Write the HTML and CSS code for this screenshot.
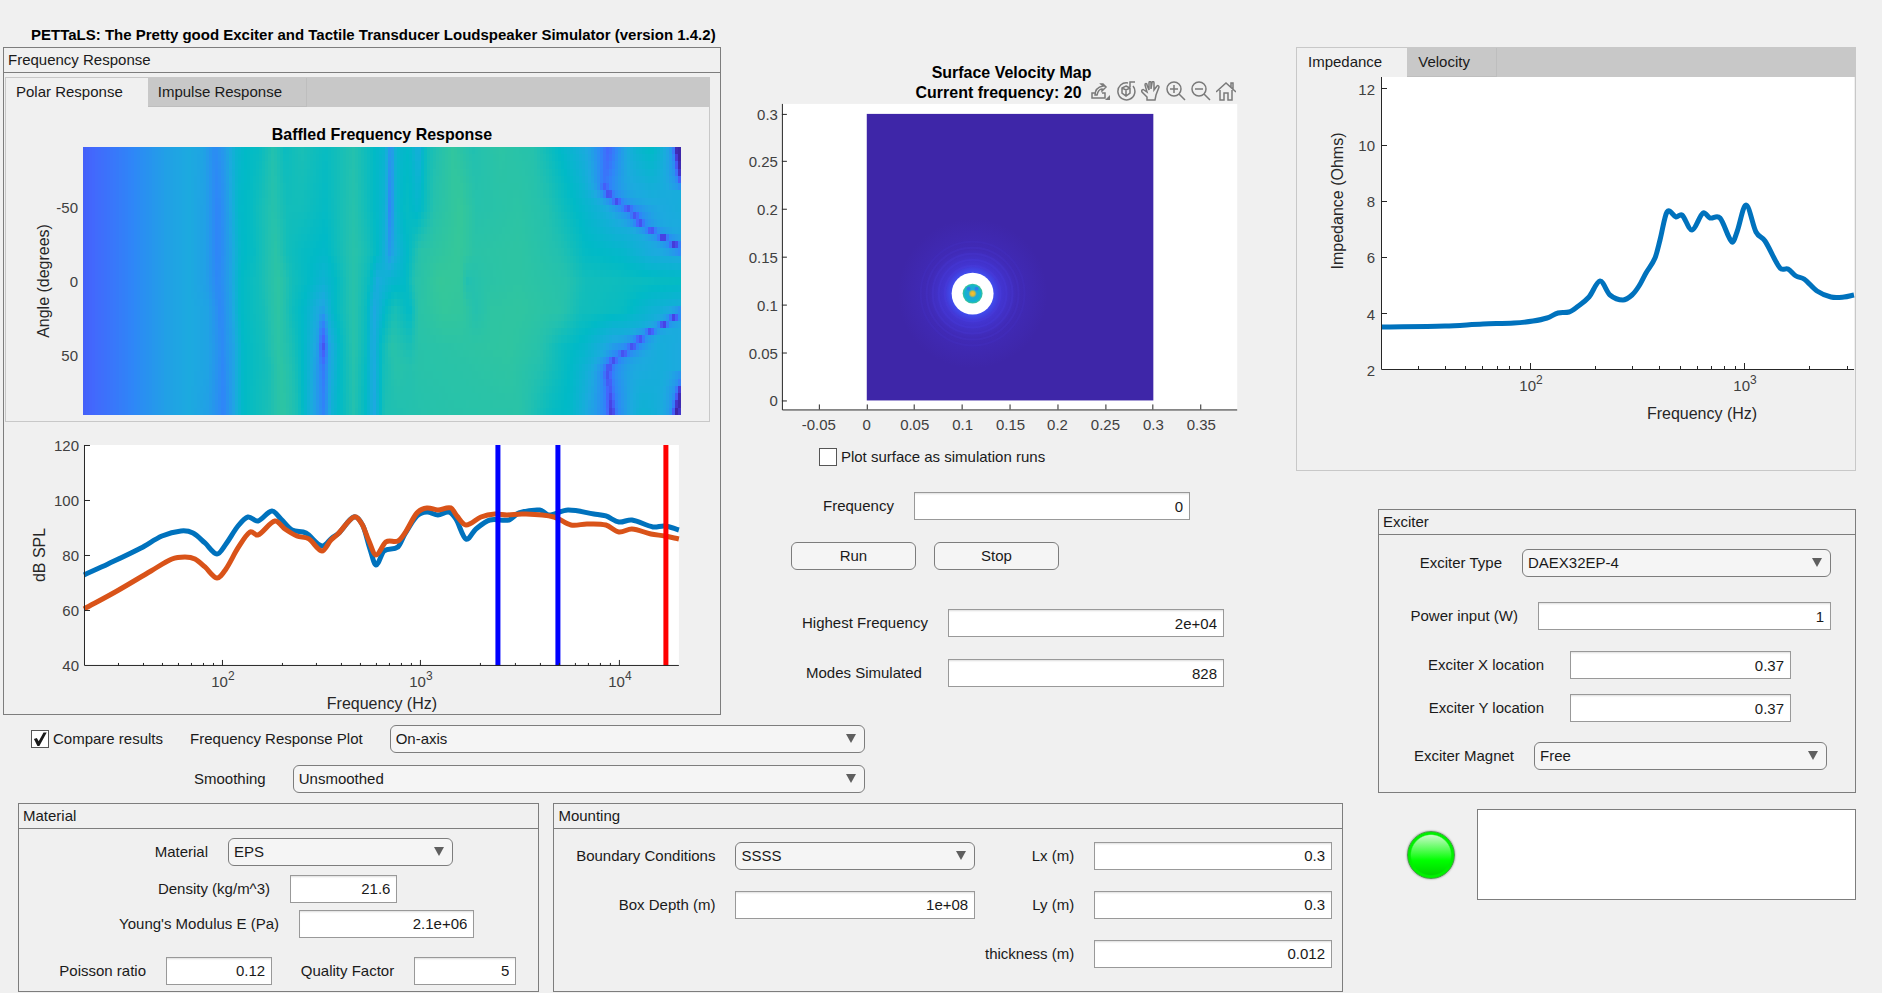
FILE: index.html
```html
<!DOCTYPE html>
<html lang="en">
<head>
    <meta charset="UTF-8">
    <meta name="viewport" content="width=device-width, initial-scale=1.0">
    <title>PETTaLS</title>
    <link rel="stylesheet" href="styles.css">
</head>
<body>
    <h1>PETTaLS: The Pretty good Exciter and Tactile Transducer Loudspeaker Simulator (version 1.4.2)</h1>

    <main class="app">
        <div class="upper">
            <div class="plots">
                <section class="panel response">
                    <h2>Frequency Response</h2>
                    <div class="tab-group">
                        <div class="tabs">
                            <button type="button" class="tab active">Polar Response</button>
                            <button type="button" class="tab">Impulse Response</button>
                        </div>
                        <svg class="chart" viewBox="0 0 703 314">
                            <text class="chart-title" x="376" y="33">Baffled Frequency Response</text>
                            <g id="heatmap" transform="translate(77 40)" shape-rendering="crispEdges"></g>
                            <text class="tick right" x="72" y="106">-50</text>
                            <text class="tick right" x="72" y="180">0</text>
                            <text class="tick right" x="72" y="254">50</text>
                            <text class="axis" transform="translate(43 174) rotate(-90)">Angle (degrees)</text>
                        </svg>
                    </div>
                    <svg class="chart" viewBox="0 0 716 292">
                        <g transform="translate(80 23)">
                            <rect class="plot" width="595" height="221"/>
                            <path id="splBlue" class="trace blue"/>
                            <path id="splOrange" class="trace orange"/>
                            <path class="marker" stroke="#0000ff" d="M414 0V221M474 0V221"/>
                            <path class="marker" stroke="#ff0000" d="M582 0V221"/>
                            <path class="axis-line" d="M.5 0V220.500H595M0 .5H6M0 55.500H6M0 110.500H6M0 165.500H6M138.500 221v-6M336.500 221v-6M535.500 221v-6"/>
                            <path id="splTicks" class="axis-line"/>
                            <text class="tick right" x="-5" y="6">120</text>
                            <text class="tick right" x="-5" y="61">100</text>
                            <text class="tick right" x="-5" y="116">80</text>
                            <text class="tick right" x="-5" y="171">60</text>
                            <text class="tick right" x="-5" y="226">40</text>
                            <text class="tick" x="139" y="242">10<tspan class="sup" dy="-7">2</tspan></text>
                            <text class="tick" x="337" y="242">10<tspan class="sup" dy="-7">3</tspan></text>
                            <text class="tick" x="536" y="242">10<tspan class="sup" dy="-7">4</tspan></text>
                            <text class="axis" x="298" y="264">Frequency (Hz)</text>
                            <text class="axis" transform="translate(-39 110) rotate(-90)">dB SPL</text>
                        </g>
                    </svg>
                </section>

                <section class="surface">
                    <div class="surface-plot">
                        <svg class="chart" viewBox="0 0 576 394">
                            <defs>
                                <radialGradient id="wave" cx="106" cy="180" r="75" gradientUnits="userSpaceOnUse">
                                    <stop offset="0" stop-color="#3f6bff"/>
                                    <stop offset=".26" stop-color="#4050f4"/>
                                    <stop offset=".38" stop-color="#4235d2"/>
                                    <stop offset=".6" stop-color="#402ab6"/>
                                    <stop offset="1" stop-color="#3e26a8"/>
                                </radialGradient>
                                <radialGradient id="core" cx="106" cy="180" r="10" gradientUnits="userSpaceOnUse">
                                    <stop offset="0" stop-color="#ffbe32"/>
                                    <stop offset=".22" stop-color="#d8bb36"/>
                                    <stop offset=".42" stop-color="#1fa8d8"/>
                                    <stop offset=".8" stop-color="#13b4ce"/>
                                    <stop offset="1" stop-color="#3fc594"/>
                                </radialGradient>
                            </defs>
                            <text class="chart-title" x="291" y="31">Surface Velocity Map</text>
                            <text class="chart-title" x="278" y="51">Current frequency: 20</text>
                            <rect class="plot" x="61" y="57" width="456" height="307"/>
                            <g transform="translate(146 67)">
                                <rect width="287" height="287" fill="#3e26a8"/>
                                <circle cx="106" cy="180" r="75" fill="url(#wave)"/>
                                <g fill="none" stroke="#4a3ddd" stroke-width="2">
                                    <circle cx="106" cy="180" r="28" opacity=".35"/>
                                    <circle cx="106" cy="180" r="34" opacity=".3"/>
                                    <circle cx="106" cy="180" r="40" opacity=".25"/>
                                    <circle cx="106" cy="180" r="46" opacity=".2"/>
                                    <circle cx="106" cy="180" r="52" opacity=".12"/>
                                </g>
                                <circle cx="106" cy="180" r="21" fill="#fff"/>
                                <circle cx="106" cy="180" r="10" fill="url(#core)"/>
                                <circle cx="102" cy="175" r="2" fill="#2e7fe8"/>
                                <circle cx="110" cy="175" r="2" fill="#2e7fe8"/>
                            </g>
                            <path class="axis-line" d="M61.500 57V363.500H517M61 67.500h5M61 114.500h5M61 162.500h5M61 210.500h5M61 258.500h5M61 306.500h5M61 354.500h5M98.500 363v-5M146.500 363v-5M193.500 363v-5M241.500 363v-5M289.500 363v-5M337.500 363v-5M385.500 363v-5M432.500 363v-5M480.500 363v-5"/>
                            <text class="tick right" x="57" y="73">0.3</text>
                            <text class="tick right" x="57" y="120">0.25</text>
                            <text class="tick right" x="57" y="168">0.2</text>
                            <text class="tick right" x="57" y="216">0.15</text>
                            <text class="tick right" x="57" y="264">0.1</text>
                            <text class="tick right" x="57" y="312">0.05</text>
                            <text class="tick right" x="57" y="360">0</text>
                            <text class="tick" x="98" y="384">-0.05</text>
                            <text class="tick" x="146" y="384">0</text>
                            <text class="tick" x="194" y="384">0.05</text>
                            <text class="tick" x="242" y="384">0.1</text>
                            <text class="tick" x="290" y="384">0.15</text>
                            <text class="tick" x="337" y="384">0.2</text>
                            <text class="tick" x="385" y="384">0.25</text>
                            <text class="tick" x="433" y="384">0.3</text>
                            <text class="tick" x="481" y="384">0.35</text>
                        </svg>
                        <div class="toolbar">
                            <button type="button" aria-label="Export">
                                <svg viewBox="0 0 20 20"><path d="M5 12H1v5h13v-5h-3M4 14c0-6 3-8 8-9l-2-2h2l3 3-4 4V8c-3 0-4 2-5 6z"/><path class="solid" d="M19 14v5h-5z"/></svg>
                            </button>
                            <button type="button" aria-label="Rotate 3D">
                                <svg viewBox="0 0 20 20"><path d="M12 2A8.500 8.500 0 1 0 17 5M14 6V1h5M10 5l4 2v5l-4 3-4-3V7zM6 7l4 2 4-2M10 9v5"/></svg>
                            </button>
                            <button type="button" aria-label="Pan">
                                <svg viewBox="0 0 20 20"><path d="M6 19v-3l-5-5c-1-2 1-3 2-2l3 2-2-7c0-2 2-2 2 0l2 5V2c0-2 2-2 2 0v6l1-6c0-2 2-2 2 0v7l3-4c1-1 2 0 2 1l-3 8-1 5z"/></svg>
                            </button>
                            <button type="button" aria-label="Zoom in">
                                <svg viewBox="0 0 20 20"><circle cx="8" cy="8" r="7"/><path d="M8 4v8M4 8h8M13 13l6 6"/></svg>
                            </button>
                            <button type="button" aria-label="Zoom out">
                                <svg viewBox="0 0 20 20"><circle cx="8" cy="8" r="7"/><path d="M4 8h8M13 13l6 6"/></svg>
                            </button>
                            <button type="button" aria-label="Restore view">
                                <svg viewBox="0 0 20 20"><path d="M0 11l10-9 10 9M4 9v10h4v-7h4v7h4V9M15 6V2h2v6"/></svg>
                            </button>
                        </div>
                    </div>
                    <div class="check plot-surface">
                        <input type="checkbox" id="plotSurface">
                        <label for="plotSurface">Plot surface as simulation runs</label>
                    </div>
                    <div class="field frequency">
                        <label for="frequency">Frequency</label>
                        <input type="text" id="frequency" value="0">
                    </div>
                    <div class="buttons">
                        <button type="button">Run</button>
                        <button type="button">Stop</button>
                    </div>
                    <div class="field highest">
                        <label for="highest">Highest Frequency</label>
                        <input type="text" id="highest" value="2e+04">
                    </div>
                    <div class="field modes">
                        <label for="modes">Modes Simulated</label>
                        <input type="text" id="modes" value="828">
                    </div>
                </section>
            </div>

            <div class="options">
                <div class="option-row">
                    <div class="check">
                        <input type="checkbox" id="compare" checked>
                        <label for="compare">Compare results</label>
                    </div>
                    <label for="responsePlot">Frequency Response Plot</label>
                    <div class="select"><select id="responsePlot"><option>On-axis</option></select></div>
                </div>
                <div class="option-row smoothing">
                    <label for="smoothing">Smoothing</label>
                    <div class="select"><select id="smoothing"><option>Unsmoothed</option></select></div>
                </div>
            </div>
        </div>

        <div class="tab-group impedance">
            <div class="tabs">
                <button type="button" class="tab active">Impedance</button>
                <button type="button" class="tab">Velocity</button>
            </div>
            <svg class="chart" viewBox="0 0 558 393">
                <g transform="translate(84 0)">
                    <rect class="plot" width="473" height="293"/>
                    <path id="impedanceTrace" class="trace blue"/>
                    <path class="axis-line" d="M.5 0V292.500H473M0 11.500h6M0 68.500h6M0 124.500h6M0 180.500h6M0 236.500h6M149.500 292v-6M363.500 292v-6"/>
                    <path id="impedanceTicks" class="axis-line"/>
                    <text class="tick right" x="-6" y="18">12</text>
                    <text class="tick right" x="-6" y="74">10</text>
                    <text class="tick right" x="-6" y="130">8</text>
                    <text class="tick right" x="-6" y="186">6</text>
                    <text class="tick right" x="-6" y="243">4</text>
                    <text class="tick right" x="-6" y="299">2</text>
                    <text class="tick" x="150" y="314">10<tspan class="sup" dy="-7">2</tspan></text>
                    <text class="tick" x="364" y="314">10<tspan class="sup" dy="-7">3</tspan></text>
                    <text class="axis" x="321" y="342">Frequency (Hz)</text>
                    <text class="axis" transform="translate(-38 124) rotate(-90)">Impedance (Ohms)</text>
                </g>
            </svg>
        </div>

        <div class="side">
            <section class="panel exciter">
                <h2>Exciter</h2>
                <div class="field exciter-type">
                    <label for="exciterType">Exciter Type</label>
                    <div class="select"><select id="exciterType"><option>DAEX32EP-4</option></select></div>
                </div>
                <div class="field power">
                    <label for="power">Power input (W)</label>
                    <input type="text" id="power" value="1">
                </div>
                <div class="field location-x">
                    <label for="locationX">Exciter X location</label>
                    <input type="text" id="locationX" value="0.37">
                </div>
                <div class="field location-y">
                    <label for="locationY">Exciter Y location</label>
                    <input type="text" id="locationY" value="0.37">
                </div>
                <div class="field magnet">
                    <label for="magnet">Exciter Magnet</label>
                    <div class="select"><select id="magnet"><option>Free</option></select></div>
                </div>
            </section>
            <div class="status">
                <div class="lamp"></div>
                <textarea aria-label="Messages"></textarea>
            </div>
        </div>

        <div class="lower">
            <section class="panel material">
                <h2>Material</h2>
                <div class="field material-name">
                    <label for="material">Material</label>
                    <div class="select"><select id="material"><option>EPS</option></select></div>
                </div>
                <div class="field density">
                    <label for="density">Density (kg/m^3)</label>
                    <input type="text" id="density" value="21.6">
                </div>
                <div class="field youngs">
                    <label for="youngs">Young's Modulus E (Pa)</label>
                    <input type="text" id="youngs" value="2.1e+06">
                </div>
                <div class="pair">
                    <div class="field poisson">
                        <label for="poisson">Poisson ratio</label>
                        <input type="text" id="poisson" value="0.12">
                    </div>
                    <div class="field quality">
                        <label for="quality">Quality Factor</label>
                        <input type="text" id="quality" value="5">
                    </div>
                </div>
            </section>

            <section class="panel mounting">
                <h2>Mounting</h2>
                <div class="mounting-grid">
                    <div class="column boundary">
                        <div class="field">
                            <label for="boundary">Boundary Conditions</label>
                            <div class="select"><select id="boundary"><option>SSSS</option></select></div>
                        </div>
                        <div class="field">
                            <label for="boxDepth">Box Depth (m)</label>
                            <input type="text" id="boxDepth" value="1e+08">
                        </div>
                    </div>
                    <div class="column size">
                        <div class="field">
                            <label for="lx">Lx (m)</label>
                            <input type="text" id="lx" value="0.3">
                        </div>
                        <div class="field">
                            <label for="ly">Ly (m)</label>
                            <input type="text" id="ly" value="0.3">
                        </div>
                        <div class="field">
                            <label for="thickness">thickness (m)</label>
                            <input type="text" id="thickness" value="0.012">
                        </div>
                    </div>
                </div>
            </section>
        </div>
    </main>

    <script src="script.js"></script>
</body>
</html>
```
FILE: styles.css
```css
* {
    box-sizing: border-box;
}
body {
    margin: 0;
    background: #f0f0f0;
    color: #1a1a1a;
    font: 15px/18px "Liberation Sans", Arial, sans-serif;
}
button, input, select, textarea {
    font: inherit;
    color: inherit;
    margin: 0;
}
h1 {
    margin: 0;
    padding: 26px 0 3px 31px;
    font-size: 15px;
    line-height: 18px;
    color: #000;
}
.app {
    display: grid;
    grid-template-columns: minmax(0, 1293fr) minmax(0, 47fr) minmax(0, 513fr);
    grid-template-rows: auto 1fr auto;
    padding: 0 26px 0 3px;
}
.upper {
    grid-column: 1;
    grid-row: 1 / 3;
}
.impedance {
    grid-column: 2 / 4;
    grid-row: 1;
    margin-bottom: 38px;
}
.side {
    grid-column: 3;
    grid-row: 2 / 4;
}
.lower {
    grid-column: 1 / 3;
    grid-row: 3;
    display: flex;
    gap: 14px;
    padding-left: 15px;
}

/* panels and tabs */
.panel {
    border: 1px solid #7d7d7d;
}
.panel h2 {
    margin: 0;
    padding: 3px 4px;
    border-bottom: 1px solid #7d7d7d;
    font-size: 15px;
    font-weight: normal;
    line-height: 18px;
}
.tab-group {
    border: 1px solid #c8c8c8;
}
.tabs {
    display: flex;
    background: #c8c8c8;
}
.tab {
    height: 29px;
    padding: 0 26px 0 11px;
    border: 0;
    border-right: 1px solid #bebebe;
    border-bottom: 1px solid #bebebe;
    background: #c8c8c8;
    text-align: left;
}
.tab.active {
    border-color: #f0f0f0;
    background: #f0f0f0;
}
.response .tab {
    padding: 0 24px 0 10px;
}
.impedance .tab.active {
    padding-right: 24px;
}

/* charts */
.plots {
    display: flex;
}
.response {
    flex: 717 1 0;
    min-width: 0;
}
.response .tab-group {
    margin: 4px 10px 0 1px;
}
.chart {
    display: block;
    width: 100%;
    height: auto;
}
.plot {
    fill: #fff;
}
.axis-line {
    fill: none;
    stroke: #262626;
}
.trace {
    fill: none;
    stroke-width: 5;
    stroke-linejoin: round;
}
.trace.blue {
    stroke: #0072bd;
}
.trace.orange {
    stroke: #d95319;
}
.marker {
    fill: none;
    stroke-width: 5;
}
.chart-title {
    font-size: 16px;
    font-weight: bold;
    text-anchor: middle;
}
.tick {
    font-size: 15px;
    fill: #404040;
    text-anchor: middle;
}
.tick.right {
    text-anchor: end;
}
.sup {
    font-size: 12px;
}
.axis {
    font-size: 16px;
    fill: #262626;
    text-anchor: middle;
}

/* surface plot and controls */
.surface {
    flex: 576 1 0;
    min-width: 0;
}
.surface-plot {
    position: relative;
}
.toolbar {
    position: absolute;
    top: 34px;
    right: 60px;
    display: flex;
    gap: 5px;
}
.toolbar button {
    width: 20px;
    height: 20px;
    padding: 0;
    border: 0;
    background: none;
}
.toolbar svg {
    display: block;
    fill: none;
    stroke: #7a7a7a;
    stroke-width: 1.5;
}
.toolbar .solid {
    fill: #7a7a7a;
    stroke: none;
}
.check {
    display: flex;
    align-items: center;
    gap: 4px;
}
.check input {
    appearance: none;
    width: 18px;
    height: 18px;
    border: 1px solid #555;
    background: #fff;
}
.check input:checked::before {
    content: "";
    display: block;
    width: 16px;
    height: 16px;
    background: #1a1a1a;
    clip-path: polygon(12% 50%, 30% 44%, 42% 64%, 72% 10%, 92% 10%, 46% 94%, 34% 94%);
}
.plot-surface {
    margin: 8px 0 0 98px;
}
.field {
    display: flex;
    align-items: center;
    gap: 20px;
}
.field label {
    flex: none;
    text-align: right;
    white-space: nowrap;
}
.field input {
    flex: 1;
    min-width: 0;
    height: 28px;
    padding: 0 6px;
    border: 1px solid #999;
    border-radius: 0;
    background: #fff;
    box-shadow: inset 0 2px 2px -1px #ddd;
    text-align: right;
}
.select {
    position: relative;
    flex: 1;
    min-width: 0;
}
.select::after {
    content: "";
    position: absolute;
    top: 9px;
    right: 9px;
    border: 5px solid transparent;
    border-top: 9px solid #5f5f5f;
    border-bottom: 0;
    pointer-events: none;
}
.select select {
    display: block;
    appearance: none;
    width: 100%;
    height: 28px;
    padding: 0 26px 0 5px;
    border: 1px solid #7d7d7d;
    border-radius: 6px;
    background: #f5f5f5;
}
.frequency {
    margin-top: 26px;
    padding-right: 106px;
}
.frequency label {
    width: 173px;
}
.buttons {
    display: flex;
    gap: 18px;
    margin: 22px 0 0 70px;
}
.buttons button {
    width: 125px;
    height: 28px;
    border: 1px solid #7d7d7d;
    border-radius: 6px;
    background: #f5f5f5;
}
.highest {
    margin-top: 39px;
    padding-right: 72px;
}
.highest label {
    width: 207px;
}
.modes {
    gap: 26px;
    margin-top: 22px;
    padding-right: 72px;
}
.modes label {
    width: 201px;
}

/* plot options */
.options {
    width: 66.7%;
    padding: 10px 0;
}
.option-row {
    display: flex;
    align-items: center;
    gap: 27px;
    padding-left: 28px;
}
.smoothing {
    margin-top: 12px;
    padding-left: 191px;
}

/* exciter */
.exciter {
    margin-left: 35px;
    padding-bottom: 22px;
}
.exciter-type {
    margin-top: 14px;
    padding-right: 24px;
}
.exciter-type label {
    width: 123px;
}
.power {
    margin-top: 25px;
    padding-right: 24px;
}
.power label {
    width: 139px;
}
.location-x, .location-y {
    gap: 26px;
    margin-top: 21px;
    padding-right: 64px;
}
.location-x label, .location-y label {
    width: 165px;
}
.location-y {
    margin-top: 15px;
}
.magnet {
    margin-top: 20px;
    padding-right: 28px;
}
.magnet label {
    width: 135px;
}
.status {
    display: flex;
    align-items: center;
    gap: 22px;
    margin-top: 16px;
    padding-left: 64px;
}
.lamp {
    flex: none;
    width: 48px;
    height: 48px;
    border: 1px solid #4b9a4b;
    border-radius: 50%;
    background: radial-gradient(circle, transparent 60%, #00f000 64%), linear-gradient(#c4fac4 8%, #00ff00 62%, #00d400 95%);
    box-shadow: 0 0 2px #777;
}
.status textarea {
    flex: 1;
    min-width: 0;
    height: 91px;
    border: 1px solid #7d7d7d;
    background: #fff;
    resize: none;
}

/* material */
.material {
    flex: 521 1 0;
    min-width: 0;
    padding-bottom: 6px;
}
.material-name {
    margin-top: 9px;
    padding-right: 85px;
}
.material-name label {
    width: 189px;
}
.density {
    margin-top: 9px;
    padding-right: 141px;
}
.density label {
    width: 251px;
}
.youngs {
    margin-top: 7px;
    padding-right: 64px;
}
.youngs label {
    width: 260px;
}
.pair {
    display: flex;
    margin-top: 19px;
    padding-right: 22px;
}
.poisson {
    flex: 253 1 0;
    min-width: 0;
}
.poisson label {
    width: 127px;
}
.quality {
    flex: 244 1 0;
    min-width: 0;
}
.quality label {
    width: 122px;
}

/* mounting */
.mounting {
    flex: 790 1 0;
    min-width: 0;
}
.mounting-grid {
    display: grid;
    grid-template-columns: 421fr 367fr;
    padding-top: 13px;
}
.column {
    display: flex;
    flex-direction: column;
    gap: 21px;
}
.boundary label {
    width: 161px;
}
.size {
    padding-right: 10px;
}
.size label {
    width: 99px;
}
```
FILE: script.js
```js
const NS = 'http://www.w3.org/2000/svg';

const splBlue = [[0,130],[24,119],[57,103],[78,91],[97,86],[109,88],[121,98],[133,109],[142,99],[154,81],[164,72],[174,76],[188,66],[197,74],[208,85],[222,88],[238,101],[248,93],[255,88],[270,72],[279,81],[286,104],[292,120],[300,106],[314,102],[321,89],[333,71],[343,67],[354,70],[365,67],[372,74],[382,94],[392,84],[406,75],[425,75],[435,68],[456,65],[465,70],[484,65],[510,69],[522,71],[535,77],[548,75],[569,82],[581,81],[595,85]];
const splOrange = [[0,164],[33,146],[67,126],[88,114],[101,112],[111,114],[121,122],[133,133],[142,124],[154,103],[166,87],[174,90],[191,76],[201,84],[213,91],[225,94],[238,106],[247,95],[254,89],[270,72],[278,79],[285,96],[292,110],[302,97],[314,96],[321,88],[333,68],[343,63],[354,65],[367,63],[373,71],[382,80],[397,72],[411,69],[423,70],[439,69],[470,72],[487,80],[503,79],[522,80],[535,87],[548,84],[567,89],[581,91],[595,94]];
const impedance = [[0,250],[64,249],[102,247],[133,246],[152,244],[166,241],[177,236],[188,235],[196,230],[208,220],[219,204],[229,218],[242,223],[251,218],[258,209],[265,196],[274,181],[279,163],[286,135],[295,140],[301,138],[311,153],[322,136],[329,141],[339,141],[351,165],[356,155],[365,128],[375,155],[384,164],[399,191],[407,192],[415,199],[423,202],[436,214],[450,220],[463,220],[473,218]];

// rounded path through the points
function smooth(points) {
    const tangent = i => {
        const a = points[Math.max(i - 1, 0)];
        const b = points[Math.min(i + 1, points.length - 1)];
        return (b[1] - a[1]) / (b[0] - a[0]);
    };
    let d = `M${points[0]}`;
    for (let i = 1; i < points.length; i++) {
        const [x0, y0] = points[i - 1];
        const [x1, y1] = points[i];
        const h = (x1 - x0) / 3;
        d += `C${x0 + h} ${y0 + h * tangent(i - 1)} ${x1 - h} ${y1 - h * tangent(i)} ${x1} ${y1}`;
    }
    return d;
}

// minor ticks of a log axis that starts at 20 Hz
function logTicks(decade, width, height) {
    let d = '';
    for (let base = 10; base <= 10000; base *= 10) {
        for (let n = 2; n < 10; n++) {
            const x = Math.round(Math.log10(base * n / 20) * decade);
            if (x > 0 && x <= width) d += `M${x - 0.5} ${height}v-3`;
        }
    }
    return d;
}

document.getElementById('splBlue').setAttribute('d', smooth(splBlue));
document.getElementById('splOrange').setAttribute('d', smooth(splOrange));
document.getElementById('impedanceTrace').setAttribute('d', smooth(impedance));
document.getElementById('splTicks').setAttribute('d', logTicks(198.5, 595, 221));
document.getElementById('impedanceTicks').setAttribute('d', logTicks(214.5, 473, 292));

// polar response: level along x for a few angles, x runs 0..1267
const low = [[0,.23],[64,.3],[124,.37],[174,.42],[224,.45]];
const levels = [
    [-90, [...low, [255,.43],[279,.36],[305,.42],[325,.51],[344,.55],[374,.57],[404,.65],[429,.58],[464,.62],[514,.57],[574,.65],[624,.54],[640,.51],[652,.37],[664,.52],[690,.55],[711,.47],[729,.6],[784,.72],[824,.64],[884,.69],[954,.66],[1004,.56],[1054,.48],[1094,.42],[1114,.35],[1134,.42],[1174,.51],[1204,.55],[1244,.47],[1267,.45]]],
    [-50, [...low, [260,.42],[284,.34],[310,.42],[330,.54],[354,.56],[404,.66],[434,.6],[464,.6],[514,.56],[574,.66],[624,.54],[640,.5],[651,.33],[663,.51],[685,.57],[709,.53],[744,.66],[799,.74],[834,.66],[924,.69],[984,.65],[1024,.58],[1084,.5],[1134,.43],[1184,.43],[1267,.47]]],
    [-20, [...low, [260,.42],[284,.34],[312,.42],[335,.54],[364,.57],[409,.68],[434,.6],[464,.57],[514,.54],[574,.67],[604,.61],[632,.52],[650,.4],[664,.48],[690,.56],[714,.67],[794,.74],[830,.68],[924,.7],[1014,.64],[1064,.56],[1144,.53],[1204,.46],[1267,.43]]],
    [0, [...low, [260,.42],[284,.35],[312,.42],[335,.55],[374,.6],[414,.7],[444,.6],[474,.56],[509,.5],[534,.55],[574,.67],[604,.58],[624,.46],[654,.52],[684,.55],[704,.66],[754,.74],[800,.73],[812,.64],[854,.68],[924,.7],[1024,.66],[1064,.6],[1164,.58],[1267,.56]]],
    [20, [...low, [264,.43],[290,.35],[316,.43],[335,.55],[384,.61],[414,.7],[444,.59],[474,.53],[509,.42],[530,.54],[574,.67],[600,.58],[617,.44],[640,.55],[660,.62],[692,.55],[712,.68],[764,.73],[804,.72],[830,.65],[864,.7],[924,.71],[1014,.67],[1054,.6],[1144,.57],[1204,.5],[1267,.46]]],
    [45, [...low, [264,.43],[294,.36],[320,.43],[340,.55],[384,.6],[414,.69],[444,.62],[474,.52],[497,.42],[509,.18],[521,.42],[544,.55],[574,.67],[600,.57],[615,.44],[632,.57],[654,.67],[692,.62],[712,.67],[804,.69],[904,.71],[964,.67],[1014,.58],[1064,.53],[1124,.42],[1174,.43],[1224,.47],[1267,.45]]],
    [60, [...low, [264,.43],[296,.35],[320,.43],[340,.55],[394,.61],[419,.7],[449,.62],[478,.5],[497,.4],[510,.31],[523,.44],[544,.55],[574,.66],[600,.56],[616,.44],[636,.6],[664,.67],[692,.65],[712,.67],[804,.68],[904,.7],[974,.64],[1020,.57],[1064,.5],[1120,.42],[1174,.45],[1224,.47],[1267,.45]]],
    [90, [...low, [264,.42],[298,.34],[320,.43],[340,.55],[394,.62],[424,.7],[454,.62],[484,.46],[511,.34],[529,.5],[574,.65],[600,.55],[617,.44],[639,.63],[724,.66],[784,.67],[924,.68],[994,.57],[1034,.54],[1074,.44],[1118,.4],[1150,.44],[1184,.5],[1224,.48],[1267,.45]]]
];
// narrow nulls: [angle, x, depth]
const nulls = [
    [[-90,1112,.02],[-68,1104,.05],[-63,1107,.18],[-57,1122,.18],[-48,1164,.15],[-40,1180,.18],[-33,1214,.18],[-28,1239,.32],[-22,1267,.2],[-16,1300,.1]],
    [[16,1300,.1],[22,1264,.15],[27,1244,.3],[32,1221,.24],[37,1190,.18],[47,1158,.16],[55,1124,.16],[62,1111,.16],[75,1116,.12],[90,1120,.2]],
    [[-90,1261,.42],[-72,1267,.3],[-62,1280,.1]],
    [[65,1280,.1],[75,1267,.3],[90,1259,.42]]
];
const palette = [[0,62,38,168],[.15,71,67,229],[.25,67,103,253],[.35,46,135,247],[.45,28,170,223],[.55,0,186,199],[.65,36,193,174],[.75,55,200,151],[1,128,203,88]];

function interpolate(table, at) {
    if (at <= table[0][0]) return table[0].slice(1);
    for (let i = 1; i < table.length; i++) {
        if (at <= table[i][0]) {
            const a = table[i - 1], b = table[i];
            const t = (at - a[0]) / (b[0] - a[0]);
            return a.slice(1).map((v, k) => v + (b[k + 1] - v) * t);
        }
    }
    return table[table.length - 1].slice(1);
}

function level(angle, x) {
    const rows = levels.map(([a, row]) => [a, interpolate(row, x)[0]]);
    let v = interpolate(rows, angle)[0];
    for (const curve of nulls) {
        if (angle < curve[0][0] || angle > curve[curve.length - 1][0]) continue;
        const [cx, depth] = interpolate(curve, angle);
        v -= depth * Math.exp(-(((x - cx) / 8) ** 2)) + 0.08 * Math.exp(-(((x - cx) / 30) ** 2));
    }
    return Math.max(0, v);
}

const heatmap = document.getElementById('heatmap');
const cellWidth = 598 / 200;
const cellHeight = 268 / 37;
for (let row = 0; row < 37; row++) {
    for (let col = 0; col < 200; col++) {
        const cell = document.createElementNS(NS, 'rect');
        const rgb = interpolate(palette, level(row * 5 - 90, (col + 0.5) / 200 * 1267));
        cell.setAttribute('x', col * cellWidth);
        cell.setAttribute('y', row * cellHeight);
        cell.setAttribute('width', cellWidth);
        cell.setAttribute('height', cellHeight);
        cell.setAttribute('fill', `rgb(${rgb.map(Math.round)})`);
        heatmap.appendChild(cell);
    }
}
```
